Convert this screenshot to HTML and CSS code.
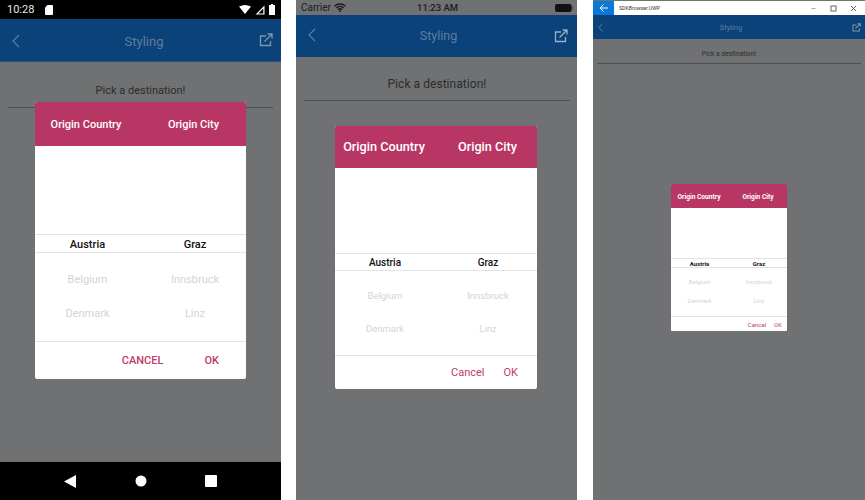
FILE: index.html
```html
<!DOCTYPE html>
<html lang="en">
<head>
  <meta charset="UTF-8">
  <meta name="viewport" content="width=device-width, initial-scale=1.0">
  <title>Styling</title>
  <link rel="stylesheet" href="styles.css">
</head>
<body>
  <div class="screens">

    <!-- Android -->
    <div class="screen android">
      <div class="statusbar">
        <span class="clock">10:28</span>
        <svg class="sd" width="8" height="10" viewBox="0 0 9 11"><path d="M2.5 0H8a1 1 0 0 1 1 1v9a1 1 0 0 1-1 1H1a1 1 0 0 1-1-1V3z" fill="#fff"/></svg>
        <span class="spacer"></span>
        <svg width="12" height="9" viewBox="0 0 12 9"><path d="M0 1.6Q6-1.6 12 1.6L6 9z" fill="#fff"/></svg>
        <svg width="10" height="10" viewBox="0 0 10 10"><path d="M9.5.5v9H.5zM8.3 3.4 3.3 8.5h5z" fill="#fff" fill-rule="evenodd"/></svg>
        <svg width="6" height="11" viewBox="0 0 6 11"><path d="M2 0h2v1h2v10H0V1h2z" fill="#fff"/></svg>
      </div>
      <div class="navbar">
        <svg class="back" width="8" height="14" viewBox="0 0 8 14"><path d="M7 1 1 7l6 6" fill="none" stroke="#5f7d9f" stroke-width="1.2"/></svg>
        <span class="title">Styling</span>
        <svg class="share" width="14" height="14" viewBox="0 0 14 14"><path d="M11.5 8v4.5h-10V3H7M5.5 8.5 13 1M8.500 1H13v4.500" fill="none" stroke="#7f96b0" stroke-width="1.3"/></svg>
      </div>
      <div class="content">
        <div class="label">Pick a destination!</div>
      </div>
      <div class="softkeys">
        <svg width="12" height="13" viewBox="0 0 12 13"><path d="M12 0v13L0 6.500z" fill="#fff"/></svg>
        <svg width="12" height="12" viewBox="0 0 12 12"><circle cx="6" cy="6" r="5.500" fill="#fff"/></svg>
        <svg width="12" height="12" viewBox="0 0 12 12"><rect width="12" height="12" rx="1" fill="#fff"/></svg>
      </div>
      <div class="dialog">
        <div class="dialog-head"><span>Origin Country</span><span>Origin City</span></div>
        <div class="wheel">
          <div class="wheel-blank"></div>
          <div class="wheel-selected"><span>Austria</span><span>Graz</span></div>
          <div class="wheel-row"><span>Belgium</span><span>Innsbruck</span></div>
          <div class="wheel-row"><span>Denmark</span><span>Linz</span></div>
        </div>
        <div class="dialog-foot"><span>CANCEL</span><span>OK</span></div>
      </div>
    </div>

    <!-- iOS -->
    <div class="screen ios">
      <div class="statusbar">
        <span class="carrier">Carrier</span>
        <svg width="12" height="9" viewBox="0 0 12 9"><path d="M.5 3.200a8 8 0 0 1 11 0M2.300 5a5.400 5.400 0 0 1 7.400 0M4 6.800a2.900 2.900 0 0 1 4 0" fill="none" stroke="#1c1c1c" stroke-width="1.400"/><circle cx="6" cy="8" r="1" fill="#1c1c1c"/></svg>
        <span class="clock">11:23 AM</span>
        <svg class="batt" width="18" height="8" viewBox="0 0 18 8"><rect width="16.500" height="8" rx="2" fill="#111"/><rect x="17" y="2.500" width="1" height="3" fill="#444"/></svg>
      </div>
      <div class="navbar">
        <svg class="back" width="8" height="14" viewBox="0 0 8 14"><path d="M7 1 1 7l6 6" fill="none" stroke="#5f7d9f" stroke-width="1.2"/></svg>
        <span class="title">Styling</span>
        <svg class="share" width="14" height="14" viewBox="0 0 14 14"><path d="M11.5 8v4.500h-10V3H7M5.500 8.500 13 1M8.500 1H13v4.500" fill="none" stroke="#9db0c4" stroke-width="1.300"/></svg>
      </div>
      <div class="content">
        <div class="label">Pick a destination!</div>
      </div>
      <div class="dialog">
        <div class="dialog-head"><span>Origin Country</span><span>Origin City</span></div>
        <div class="wheel">
          <div class="wheel-blank"></div>
          <div class="wheel-selected"><span>Austria</span><span>Graz</span></div>
          <div class="wheel-row"><span>Belgium</span><span>Innsbruck</span></div>
          <div class="wheel-row"><span>Denmark</span><span>Linz</span></div>
        </div>
        <div class="dialog-foot"><span>Cancel</span><span>OK</span></div>
      </div>
    </div>

    <!-- UWP -->
    <div class="screen uwp">
      <div class="titlebar">
        <div class="win-back">
          <svg width="9" height="8" viewBox="0 0 9 8"><path d="M4.500.500 1 4l3.500 3.500M1 4h8" fill="none" stroke="#fff" stroke-width="1"/></svg>
        </div>
        <span class="win-name">SDKBrowser.UWP</span>
        <span class="spacer"></span>
        <div class="win-btns">
          <svg width="7" height="7" viewBox="0 0 7 7"><path d="M1.500 3.500h4" stroke="#aaa" fill="none"/></svg>
          <svg width="7" height="7" viewBox="0 0 7 7"><rect x="1" y="1" width="5" height="5" stroke="#666" fill="none"/></svg>
          <svg width="7" height="7" viewBox="0 0 7 7"><path d="m1 1 5 5M6 1 1 6" stroke="#555" fill="none"/></svg>
        </div>
      </div>
      <div class="navbar">
        <svg class="back" width="5" height="9" viewBox="0 0 5 9"><path d="M4.500.5.800 4.500l3.700 4" fill="none" stroke="#5f7d9f" stroke-width="1"/></svg>
        <span class="title">Styling</span>
        <svg class="share" width="9" height="9" viewBox="0 0 14 14"><path d="M11.500 8v4.500h-10V3H7M5.500 8.500 13 1M8.500 1H13v4.500" fill="none" stroke="#7f96b0" stroke-width="1.600"/></svg>
      </div>
      <div class="content">
        <div class="label">Pick a destination!</div>
      </div>
      <div class="dialog">
        <div class="dialog-head"><span>Origin Country</span><span>Origin City</span></div>
        <div class="wheel">
          <div class="wheel-blank"></div>
          <div class="wheel-selected"><span>Austria</span><span>Graz</span></div>
          <div class="wheel-row"><span>Belgium</span><span>Innsbruck</span></div>
          <div class="wheel-row"><span>Denmark</span><span>Linz</span></div>
        </div>
        <div class="dialog-foot"><span>Cancel</span><span>OK</span></div>
      </div>
    </div>

  </div>
</body>
</html>
```

FILE: styles.css
```css
html, body {
  margin: 0;
  padding: 0;
  background: #fff;
}
.screens {
  display: flex;
  width: 865px;
  height: 500px;
  overflow: hidden;
  font-family: Roboto, "Liberation Sans", sans-serif;
}
.screen {
  position: relative;
  display: flex;
  flex-direction: column;
  flex: none;
  height: 500px;
  background: #707172;
}
.spacer {
  flex: 1;
}

/* shared bars */
.navbar {
  display: flex;
  align-items: center;
  justify-content: space-between;
  flex: none;
  background: #0a4279;
  box-sizing: border-box;
}
.title {
  color: #5f7d9f;
}
.content {
  flex: 1;
}
.label {
  text-align: center;
  color: #2b2c2d;
  border-bottom: 1px solid #4f5051;
}

/* dialog */
.dialog {
  position: absolute;
  display: flex;
  flex-direction: column;
  background: #fff;
  border-radius: 2px;
  overflow: hidden;
}
.dialog-head {
  display: flex;
  flex: none;
  align-items: center;
  background: #b83664;
  color: #fff;
  font-weight: 500;
}
.dialog-head span,
.wheel-selected span,
.wheel-row span {
  box-sizing: border-box;
  text-align: center;
}
.wheel {
  flex: 1;
  display: flex;
  flex-direction: column;
}
.wheel-blank {
  flex: none;
}
.wheel-selected {
  display: flex;
  align-items: center;
  flex: none;
  box-sizing: border-box;
  border-top: 1px solid #e2e2e2;
  border-bottom: 1px solid #e2e2e2;
  color: #111;
  font-weight: 500;
}
.wheel-row {
  display: flex;
  align-items: center;
  flex: none;
  color: #d4d4d4;
}
.dialog-foot {
  display: flex;
  align-items: center;
  justify-content: flex-end;
  flex: none;
  box-sizing: border-box;
  border-top: 1px solid #e4e3e0;
  color: #c23a68;
}

/* android */
.android {
  width: 281px;
  margin-right: 15px;
}
.android .statusbar {
  display: flex;
  align-items: center;
  flex: none;
  height: 19px;
  padding: 0 6px 0 7px;
  gap: 4px;
  background: #000;
  color: #e8e8e8;
  font-size: 11px;
}
.android .sd {
  margin-left: 7px;
}
.android .navbar {
  height: 43px;
  padding: 0 8px 0 12px;
  border-bottom: 1px solid #2c5481;
}
.android .title {
  font-size: 13px;
  margin-left: 9px;
  padding-top: 2px;
}
.android .back {
  padding-top: 1px;
}
.android .label {
  margin: 20px 8px 0;
  height: 25px;
  line-height: 18px;
  font-size: 11px;
}
.android .softkeys {
  display: flex;
  align-items: center;
  justify-content: space-between;
  flex: none;
  height: 38px;
  padding: 0 64px;
  background: #000;
}
.android .dialog {
  left: 35px;
  top: 102px;
  width: 211px;
  height: 277px;
}
.android .dialog-head {
  height: 44px;
  font-size: 11px;
}
.android .dialog-head span:first-child {
  width: 102px;
}
.android .dialog-head span:last-child {
  width: 105px;
  margin-left: 4px;
}
.android .wheel-selected span:first-child,
.android .wheel-row span:first-child {
  width: 105px;
}
.android .wheel-selected span:last-child,
.android .wheel-row span:last-child {
  width: 106px;
  padding-left: 4px;
}
.android .wheel-blank {
  height: 88px;
}
.android .wheel-selected {
  height: 19px;
  padding-top: 1px;
  font-size: 11px;
}
.android .wheel-row {
  height: 34px;
  font-size: 11px;
}
.android .wheel-selected + .wheel-row {
  margin-top: 9px;
}
.android .dialog-foot {
  margin-top: 1px;
  height: 38px;
  padding: 0 27px 0 0;
  gap: 41px;
  font-size: 11px;
  font-weight: 500;
}

/* ios */
.ios {
  width: 281px;
  margin-right: 16px;
}
.ios .statusbar {
  position: relative;
  display: flex;
  align-items: center;
  flex: none;
  height: 15px;
  padding: 0 4px 0 5px;
  gap: 3px;
  background: #707172;
  color: #1c1c1c;
  font-size: 10px;
}
.ios .clock {
  position: absolute;
  left: 121px;
  font-size: 9.5px;
  font-weight: 500;
}
.ios .batt {
  margin-left: auto;
}
.ios .navbar {
  height: 42px;
  padding: 0 9px 0 12px;
}
.ios .navbar .back {
  margin-bottom: 2px;
}
.ios .title {
  font-size: 12.5px;
  margin-bottom: 1px;
  margin-left: 7px;
}
.ios .label {
  margin: 18px 7px 0 8px;
  height: 25px;
  line-height: 18px;
  font-size: 12px;
  letter-spacing: 0.05px;
}
.ios .dialog {
  left: 39px;
  top: 126px;
  width: 202px;
  height: 263px;
}
.ios .dialog-head {
  height: 42px;
  padding-bottom: 2px;
  box-sizing: border-box;
  font-size: 12.7px;
}
.ios .dialog-head span:first-child {
  width: 98px;
}
.ios .dialog-head span:last-child {
  width: 104px;
  padding-left: 5px;
}
.ios .wheel-selected span:first-child,
.ios .wheel-row span:first-child {
  width: 100px;
}
.ios .wheel-selected span:last-child,
.ios .wheel-row span:last-child {
  width: 102px;
  padding-left: 4px;
}
.ios .wheel-blank {
  height: 85px;
}
.ios .wheel-selected {
  height: 18px;
  font-size: 10px;
}
.ios .wheel-row {
  height: 33px;
  font-size: 9.5px;
}
.ios .wheel-selected + .wheel-row {
  margin-top: 8px;
}
.ios .dialog-foot {
  margin-top: 1px;
  height: 34px;
  padding: 0 19px 0 0;
  gap: 19px;
  font-size: 11px;
}

/* uwp */
.uwp {
  width: 272px;
}
.uwp .titlebar {
  display: flex;
  align-items: center;
  flex: none;
  height: 14px;
  margin-top: 1px;
  background: #fff;
}
.uwp .win-back {
  display: flex;
  align-items: center;
  justify-content: center;
  width: 21px;
  height: 14px;
  background: #0a78d7;
}
.uwp .win-name {
  margin-left: 5px;
  font-size: 5.2px;
  color: #333;
}
.uwp .win-btns {
  display: flex;
  gap: 13px;
  padding-right: 8px;
}
.uwp .navbar {
  height: 24px;
  padding: 0 4px 0 5px;
}
.uwp .title {
  font-size: 7.5px;
  margin-left: 7px;
}
.uwp .label {
  margin: 10px 4px 0;
  height: 14px;
  line-height: 10px;
  font-size: 6.7px;
}
.uwp .dialog {
  left: 78px;
  top: 184px;
  width: 116px;
  height: 147px;
  border-radius: 1px;
}
.uwp .dialog-head {
  height: 24px;
  padding-top: 1px;
  box-sizing: border-box;
  font-size: 6.6px;
  font-weight: 700;
}
.uwp .dialog-head span:first-child {
  width: 56px;
}
.uwp .dialog-head span:last-child {
  width: 60px;
  padding-left: 2px;
}
.uwp .wheel-selected span:first-child,
.uwp .wheel-row span:first-child {
  width: 57px;
}
.uwp .wheel-selected span:last-child,
.uwp .wheel-row span:last-child {
  width: 59px;
  padding-left: 3px;
}
.uwp .wheel-blank {
  height: 50px;
}
.uwp .wheel-selected {
  height: 10px;
  font-size: 6px;
  font-weight: 700;
}
.uwp .wheel-row {
  height: 19px;
  font-size: 6px;
}
.uwp .wheel-selected + .wheel-row {
  margin-top: 4px;
}
.uwp .dialog-foot {
  margin-top: 1px;
  height: 15px;
  padding: 0 5px 0 0;
  gap: 8px;
  font-size: 6px;
}
```
